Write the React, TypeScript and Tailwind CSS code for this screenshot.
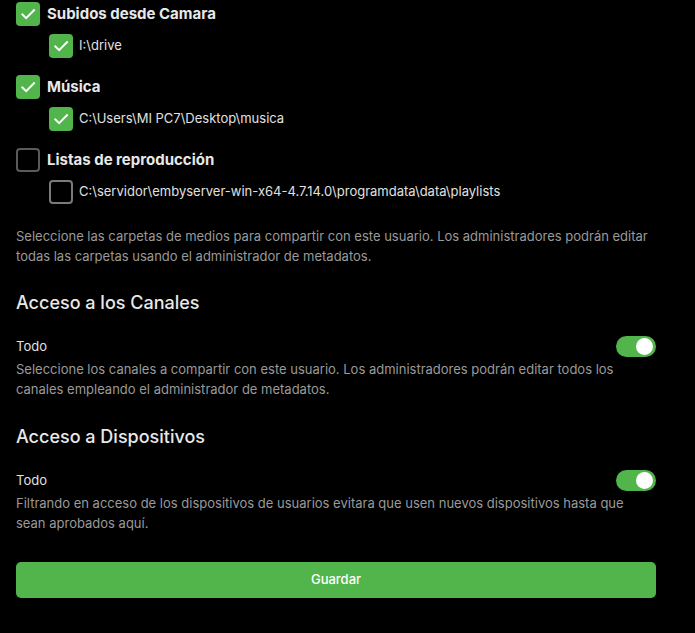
import React from "react";

const font = { fontFamily: "Inter, 'Noto Sans', sans-serif" };

function Check({ checked, sub }: { checked: boolean; sub?: boolean }) {
  if (checked) {
    return (
      <div className="w-6 h-6 rounded-[4px] bg-[#52b54b] flex items-center justify-center shrink-0">
        <svg width="18" height="18" viewBox="0 0 24 24" fill="none">
          <path d="M4.5 12.5l5 5L20 7" stroke="white" strokeWidth="2.6" strokeLinecap="square" />
        </svg>
      </div>
    );
  }
  return (
    <div
      className={
        "w-6 h-6 rounded-[4px] border-2 shrink-0 " +
        (sub ? "border-[#7a7a7a]" : "border-[#5a5a5a]")
      }
    />
  );
}

function Group({ label, path, checked }: { label: string; path: string; checked: boolean }) {
  return (
    <div className="flex flex-col gap-2">
      <div className="flex items-center h-6 gap-[7px]">
        <Check checked={checked} />
        <span className="text-[15px] font-bold text-[#e8e8e8]">{label}</span>
      </div>
      <div className="flex items-center h-6 gap-[6px] pl-[33px]">
        <Check checked={checked} sub />
        <span className="text-[13px] text-[#e0e0e0]">{path}</span>
      </div>
    </div>
  );
}

function Toggle() {
  return (
    <div className="w-[40px] h-[21px] rounded-full bg-[#52b54b] flex items-center justify-end pr-[3px]">
      <div className="w-[17px] h-[17px] rounded-full bg-white" />
    </div>
  );
}

export default function App() {
  return (
    <div className="min-h-[633px] bg-black" style={font}>
      <div className="ml-4 w-[640px] pt-[2px]">
        <div className="flex flex-col gap-[17px]">
          <Group label="Subidos desde Camara" path="I:\drive" checked />
          <Group label="Música" path="C:\Users\MI PC7\Desktop\musica" checked />
          <Group
            label="Listas de reproducción"
            path="C:\servidor\embyserver-win-x64-4.7.14.0\programdata\data\playlists"
            checked={false}
          />
        </div>
        <p className="mt-[22px] text-[13px] leading-5 text-[#9a9a9a]">
          Seleccione las carpetas de medios para compartir con este usuario. Los administradores podrán editar
          todas las carpetas usando el administrador de metadatos.
        </p>

        <h2 className="mt-[25px] text-[18px] leading-6 font-medium text-[#e8e8e8]">Acceso a los Canales</h2>
        <div className="mt-[21px] flex items-center justify-between h-[21px]">
          <span className="text-[13px] text-[#e0e0e0]">Todo</span>
          <Toggle />
        </div>
        <p className="mt-[2px] text-[13px] leading-5 text-[#9a9a9a]">
          Seleccione los canales a compartir con este usuario. Los administradores podrán editar todos los canales
          empleando el administrador de metadatos.
        </p>

        <h2 className="mt-[26px] text-[18px] leading-6 font-medium text-[#e8e8e8]">Acceso a Dispositivos</h2>
        <div className="mt-[21px] flex items-center justify-between h-[21px]">
          <span className="text-[13px] text-[#e0e0e0]">Todo</span>
          <Toggle />
        </div>
        <p className="mt-[2px] text-[13px] leading-5 text-[#9a9a9a]">
          Filtrando en acceso de los dispositivos de usuarios evitara que usen nuevos dispositivos hasta que sean
          aprobados aquí.
        </p>

        <button className="mt-[29px] w-full h-9 rounded-[5px] bg-[#52b54b] text-white text-[13px] font-medium">
          Guardar
        </button>
      </div>
    </div>
  );
}
